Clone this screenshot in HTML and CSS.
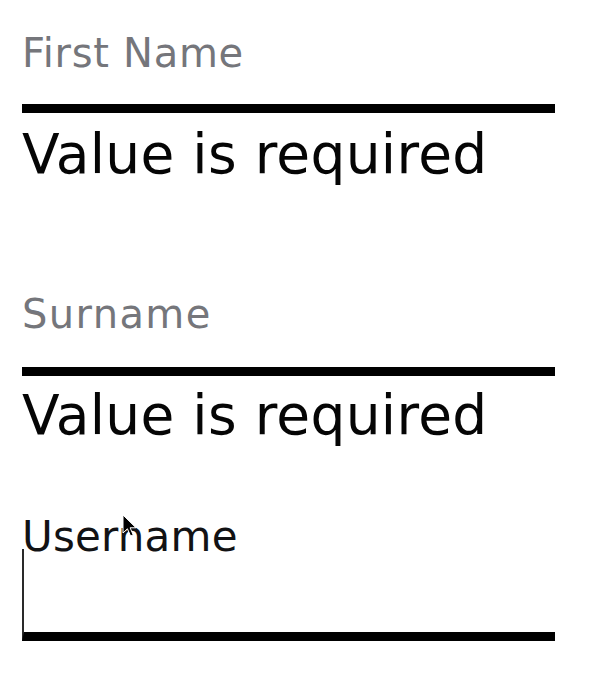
FILE: index.html
```html
<!DOCTYPE html>
<html lang="en">
<head>
<meta charset="utf-8">
<title>Form</title>
<link rel="stylesheet" href="styles.css">
</head>
<body>
<form class="form">
  <div class="field field-first">
    <label class="label" for="first">First Name</label>
    <input class="input input-first" id="first" type="text">
    <div class="error">Value is required</div>
  </div>
  <div class="field field-surname">
    <label class="label" for="surname">Surname</label>
    <input class="input input-surname" id="surname" type="text">
    <div class="error error-second">Value is required</div>
  </div>
  <div class="field field-username">
    <label class="label label-active" for="username">Username</label>
    <input class="input input-active" id="username" type="text">
  </div>
</form>
<svg class="cursor" width="16" height="24" viewBox="0 0 16 24" aria-hidden="true">
  <path d="M1 1 L1 19 L5.4 14.8 L8.6 22 L11.2 20.9 L8.1 13.8 L14 13.8 Z" fill="#000" stroke="#fff" stroke-width="1" stroke-linejoin="round"/>
</svg>
</body>
</html>
```
FILE: styles.css
```css
html, body {
  margin: 0;
  padding: 0;
  background: #ffffff;
}

body {
  font-family: "DejaVu Sans", "Liberation Sans", sans-serif;
  width: 598px;
  height: 690px;
  overflow: hidden;
  position: relative;
}

.form {
  display: flex;
  flex-direction: column;
  width: 533px;
  margin-left: 22px;
  padding-top: 29px;
}

.field {
  display: flex;
  flex-direction: column;
}

.label {
  display: block;
  font-size: 40px;
  line-height: 48px;
  height: 48px;
  color: #75767b;
  letter-spacing: 0.7px;
  white-space: nowrap;
}

.input {
  display: block;
  box-sizing: content-box;
  width: 100%;
  padding: 0;
  margin: 0;
  border: none;
  border-bottom: 9px solid #000;
  background: transparent;
  outline: none;
  font: inherit;
}

.input-first {
  height: 27px;
}

.field-surname {
  margin-top: 104px;
}

.field-surname .label {
  letter-spacing: 1.4px;
}

.input-surname {
  height: 29px;
}

.error {
  font-size: 55px;
  line-height: 64px;
  color: #050505;
  margin-top: 9px;
  white-space: nowrap;
  letter-spacing: 0.3px;
}

.error-second {
  margin-top: 7px;
}

.field-username {
  margin-top: 78px;
}

.label-active {
  font-size: 42px;
  line-height: 24px;
  height: 24px;
  color: #121214;
  letter-spacing: 0.2px;
  position: relative;
  z-index: 1;
}

.input-active {
  box-sizing: border-box;
  height: 92px;
  border-left: 2px solid #2a2a2a;
}

.cursor {
  position: absolute;
  left: 122px;
  top: 514px;
  z-index: 2;
}
```
